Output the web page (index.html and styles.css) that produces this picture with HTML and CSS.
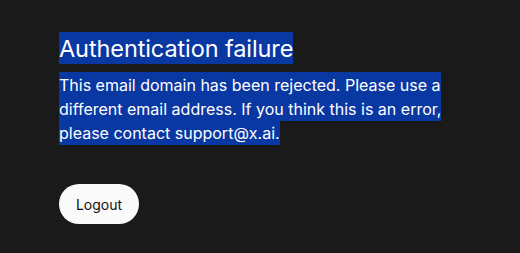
FILE: index.html
```html
<!DOCTYPE html>
<html>
<head>
<meta charset="utf-8">
<link rel="stylesheet" href="styles.css">
</head>
<body>
<main class="page">
  <h1 class="title"><span class="sel">Authentication failure </span></h1>
  <p class="message"><span class="sel">This email domain has been rejected. Please use a different email address. If you think this is an error, please contact support@x.ai.</span></p>
  <button class="logout">Logout</button>
</main>
</body>
</html>
```
FILE: styles.css
```css
html, body {
  margin: 0;
  background: #1a1a1a;
}
.page {
  padding: 32px 59px 0 59px;
  font-family: Inter, "Noto Sans", sans-serif;
  color: #ffffff;
}
.title {
  margin: 0;
  font-size: 23.5px;
  font-weight: 400;
  line-height: 31px;
  letter-spacing: -0.1px;
}
.title .sel {
  padding: 1.5px 0;
}
.sel {
  background: #0a38a3;
  -webkit-box-decoration-break: clone;
  box-decoration-break: clone;
}
.message {
  margin: 9px 0 0 0;
  max-width: 392px;
  font-size: 16px;
  line-height: 24px;
}
.message .sel {
  padding: 2.5px 0;
}
.logout {
  margin-top: 40px;
  height: 40px;
  width: 80px;
  border: none;
  border-radius: 20px;
  background: #fafafa;
  color: #111;
  font-family: Inter, "Noto Sans", sans-serif;
  font-size: 14px;
  cursor: pointer;
}
```
